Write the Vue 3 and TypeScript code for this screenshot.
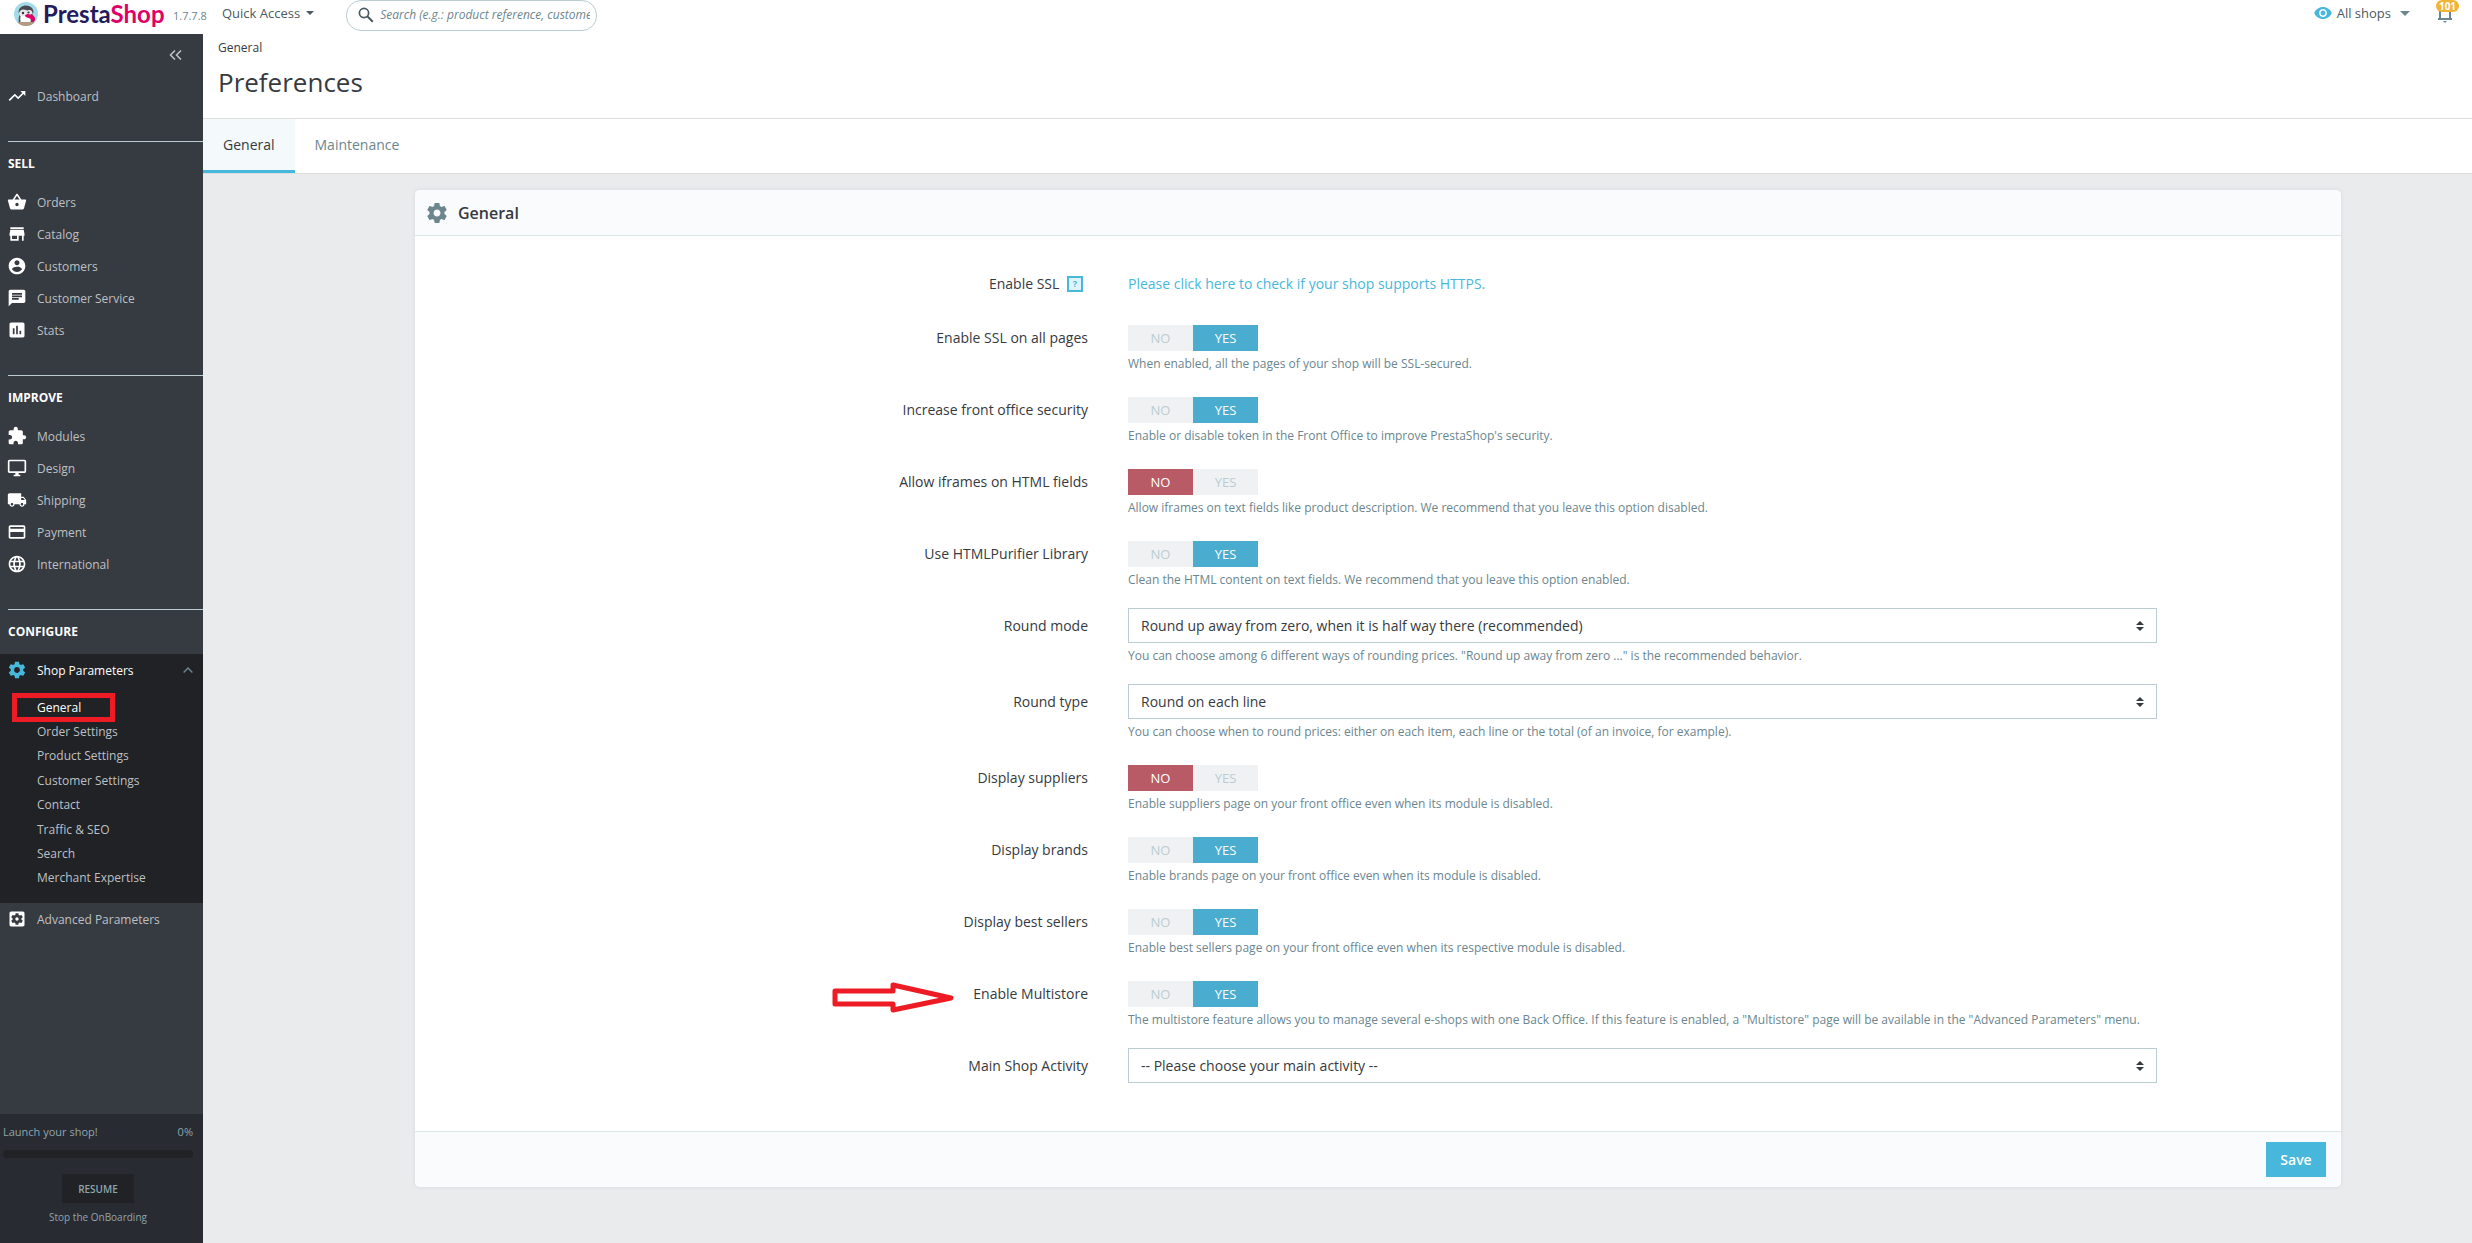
<script setup lang="ts">
import { ref, reactive } from 'vue'

interface NavItem {
  label: string
  icon: string
}

interface NavSection {
  title: string
  items: NavItem[]
}

interface Field {
  id: string
  label: string
  kind: 'switch' | 'select'
  value: string
  help?: string
  marked?: boolean
}

const icons: Record<string, string> = {
  trending: 'M16 6l2.29 2.29-4.88 4.88-4-4L2 16.59 3.41 18l6-6 4 4 6.3-6.29L22 12V6z',
  basket:
    'M17.21 9l-4.38-6.56c-.19-.28-.51-.42-.83-.42-.32 0-.64.14-.83.43L6.79 9H2c-.55 0-1 .45-1 1 0 .09.01.18.04.27l2.54 9.27c.23.84 1 1.46 1.92 1.46h13c.92 0 1.69-.62 1.93-1.46l2.54-9.27L23 10c0-.55-.45-1-1-1h-4.79zM9 9l3-4.4L15 9H9zm3 8c-1.1 0-2-.9-2-2s.9-2 2-2 2 .9 2 2-.9 2-2 2z',
  store: 'M20 4H4v2h16V4zm1 10v-2l-1-5H4l-1 5v2h1v6h10v-6h4v6h2v-6h1zm-9 4H6v-4h6v4z',
  account:
    'M12 2C6.48 2 2 6.48 2 12s4.48 10 10 10 10-4.48 10-10S17.52 2 12 2zm0 3c1.66 0 3 1.34 3 3s-1.34 3-3 3-3-1.34-3-3 1.34-3 3-3zm0 14.2c-2.5 0-4.71-1.28-6-3.22.03-1.99 4-3.08 6-3.08 1.99 0 5.97 1.09 6 3.08-1.29 1.94-3.5 3.22-6 3.22z',
  chat: 'M20 2H4c-1.1 0-1.99.9-1.99 2L2 22l4-4h14c1.1 0 2-.9 2-2V4c0-1.1-.9-2-2-2zM6 9h12v2H6V9zm8 5H6v-2h8v2zm4-6H6V6h12v2z',
  chart:
    'M19 3H5c-1.1 0-2 .9-2 2v14c0 1.1.9 2 2 2h14c1.1 0 2-.9 2-2V5c0-1.1-.9-2-2-2zM9 17H7v-7h2v7zm4 0h-2V7h2v10zm4 0h-2v-4h2v4z',
  puzzle:
    'M20.5 11H19V7c0-1.1-.9-2-2-2h-4V3.5C13 2.12 11.88 1 10.5 1S8 2.12 8 3.5V5H4c-1.1 0-1.99.9-1.99 2v3.8H3.5c1.49 0 2.7 1.21 2.7 2.7s-1.21 2.7-2.7 2.7H2V20c0 1.1.9 2 2 2h3.8v-1.5c0-1.49 1.21-2.7 2.7-2.7 1.49 0 2.7 1.21 2.7 2.7V22H17c1.1 0 2-.9 2-2v-4h1.5c1.38 0 2.5-1.12 2.5-2.5S21.88 11 20.5 11z',
  desktop:
    'M21 2H3c-1.1 0-2 .9-2 2v12c0 1.1.9 2 2 2h7v2H8v2h8v-2h-2v-2h7c1.1 0 2-.9 2-2V4c0-1.1-.9-2-2-2zm0 14H3V4h18v12z',
  truck:
    'M20 8h-3V4H3c-1.1 0-2 .9-2 2v11h2c0 1.66 1.34 3 3 3s3-1.34 3-3h6c0 1.66 1.34 3 3 3s3-1.34 3-3h2v-5l-3-4zM6 18.5c-.83 0-1.5-.67-1.5-1.5s.67-1.5 1.5-1.5 1.5.67 1.5 1.5-.67 1.5-1.5 1.5zm13.5-9l1.96 2.5H17V9.5h2.5zm-1.5 9c-.83 0-1.5-.67-1.5-1.5s.67-1.5 1.5-1.5 1.5.67 1.5 1.5-.67 1.5-1.5 1.5z',
  card: 'M20 4H4c-1.11 0-1.99.89-1.99 2L2 18c0 1.11.89 2 2 2h16c1.11 0 2-.89 2-2V6c0-1.11-.89-2-2-2zm0 14H4v-6h16v6zm0-10H4V6h16v2z',
  globe:
    'M11.99 2C6.47 2 2 6.48 2 12s4.47 10 9.99 10C17.52 22 22 17.52 22 12S17.52 2 11.99 2zm6.93 6h-2.95c-.32-1.25-.78-2.45-1.38-3.56 1.84.63 3.37 1.91 4.33 3.56zM12 4.04c.83 1.2 1.48 2.53 1.91 3.96h-3.82c.43-1.43 1.08-2.76 1.91-3.96zM4.26 14C4.1 13.36 4 12.69 4 12s.1-1.36.26-2h3.38c-.08.66-.14 1.32-.14 2s.06 1.34.14 2H4.26zm.82 2h2.95c.32 1.25.78 2.45 1.38 3.56-1.84-.63-3.37-1.9-4.33-3.56zm2.95-8H5.08c.96-1.66 2.49-2.93 4.33-3.56C8.81 5.55 8.35 6.75 8.03 8zM12 19.96c-.83-1.2-1.48-2.53-1.91-3.96h3.82c-.43 1.43-1.08 2.76-1.91 3.96zM14.34 14H9.66c-.09-.66-.16-1.32-.16-2s.07-1.35.16-2h4.68c.09.65.16 1.32.16 2s-.07 1.34-.16 2zm.25 5.56c.6-1.11 1.06-2.31 1.38-3.56h2.95c-.96 1.65-2.49 2.93-4.33 3.56zM16.36 14c.08-.66.14-1.32.14-2s-.06-1.34-.14-2h3.38c.16.64.26 1.31.26 2s-.1 1.36-.26 2h-3.38z',
  gear: 'M19.43 12.98c.04-.32.07-.64.07-.98s-.03-.66-.07-.98l2.11-1.65c.19-.15.24-.42.12-.64l-2-3.46c-.12-.22-.39-.3-.61-.22l-2.49 1c-.52-.4-1.08-.73-1.69-.98l-.38-2.65C14.46 2.18 14.25 2 14 2h-4c-.25 0-.46.18-.49.42l-.38 2.65c-.61.25-1.17.59-1.69.98l-2.49-1c-.23-.09-.49 0-.61.22l-2 3.46c-.13.22-.07.49.12.64l2.11 1.65c-.04.32-.07.65-.07.98s.03.66.07.98l-2.11 1.65c-.19.15-.24.42-.12.64l2 3.46c.12.22.39.3.61.22l2.49-1c.52.4 1.08.73 1.69.98l.38 2.65c.03.24.24.42.49.42h4c.25 0 .46-.18.49-.42l.38-2.65c.61-.25 1.17-.59 1.69-.98l2.49 1c.23.09.49 0 .61-.22l2-3.46c.12-.22.07-.49-.12-.64l-2.11-1.65zM12 15.5c-1.93 0-3.5-1.57-3.5-3.5s1.57-3.5 3.5-3.5 3.5 1.57 3.5 3.5-1.57 3.5-3.5 3.5z',
  gearBox:
    'M12 10c-1.1 0-2 .9-2 2s.9 2 2 2 2-.9 2-2-.9-2-2-2zm7-7H5c-1.11 0-2 .9-2 2v14c0 1.1.89 2 2 2h14c1.11 0 2-.9 2-2V5c0-1.1-.89-2-2-2zm-1.75 9c0 .23-.02.46-.05.68l1.48 1.16c.13.11.17.3.08.45l-1.4 2.42c-.09.15-.27.21-.43.15l-1.74-.7c-.36.28-.76.51-1.18.69l-.26 1.85c-.03.17-.18.3-.35.3h-2.8c-.17 0-.32-.13-.35-.29l-.26-1.85c-.43-.18-.82-.41-1.18-.69l-1.74.7c-.16.06-.34 0-.43-.15l-1.4-2.42c-.09-.15-.05-.34.08-.45l1.48-1.16c-.03-.23-.05-.46-.05-.69s.02-.46.05-.68l-1.48-1.16c-.13-.11-.17-.3-.08-.45l1.4-2.42c.09-.15.27-.21.43-.15l1.74.7c.36-.28.76-.51 1.18-.69l.26-1.85c.03-.17.18-.3.35-.3h2.8c.17 0 .32.13.35.29l.26 1.85c.43.18.82.41 1.18.69l1.74-.7c.16-.06.34 0 .43.15l1.4 2.42c.09.15.05.34-.08.45l-1.48 1.16c.03.23.05.46.05.69z',
}

const sections: NavSection[] = [
  {
    title: 'SELL',
    items: [
      { label: 'Orders', icon: 'basket' },
      { label: 'Catalog', icon: 'store' },
      { label: 'Customers', icon: 'account' },
      { label: 'Customer Service', icon: 'chat' },
      { label: 'Stats', icon: 'chart' },
    ],
  },
  {
    title: 'IMPROVE',
    items: [
      { label: 'Modules', icon: 'puzzle' },
      { label: 'Design', icon: 'desktop' },
      { label: 'Shipping', icon: 'truck' },
      { label: 'Payment', icon: 'card' },
      { label: 'International', icon: 'globe' },
    ],
  },
]

const submenu = [
  'General',
  'Order Settings',
  'Product Settings',
  'Customer Settings',
  'Contact',
  'Traffic & SEO',
  'Search',
  'Merchant Expertise',
]

const currentPage = ref('General')
const query = ref('')

const fields = reactive<Field[]>([
  {
    id: 'ssl-all',
    label: 'Enable SSL on all pages',
    kind: 'switch',
    value: 'yes',
    help: 'When enabled, all the pages of your shop will be SSL-secured.',
  },
  {
    id: 'security',
    label: 'Increase front office security',
    kind: 'switch',
    value: 'yes',
    help: "Enable or disable token in the Front Office to improve PrestaShop's security.",
  },
  {
    id: 'iframes',
    label: 'Allow iframes on HTML fields',
    kind: 'switch',
    value: 'no',
    help: 'Allow iframes on text fields like product description. We recommend that you leave this option disabled.',
  },
  {
    id: 'purifier',
    label: 'Use HTMLPurifier Library',
    kind: 'switch',
    value: 'yes',
    help: 'Clean the HTML content on text fields. We recommend that you leave this option enabled.',
  },
  {
    id: 'round-mode',
    label: 'Round mode',
    kind: 'select',
    value: 'Round up away from zero, when it is half way there (recommended)',
    help: 'You can choose among 6 different ways of rounding prices. "Round up away from zero ..." is the recommended behavior.',
  },
  {
    id: 'round-type',
    label: 'Round type',
    kind: 'select',
    value: 'Round on each line',
    help: 'You can choose when to round prices: either on each item, each line or the total (of an invoice, for example).',
  },
  {
    id: 'suppliers',
    label: 'Display suppliers',
    kind: 'switch',
    value: 'no',
    help: 'Enable suppliers page on your front office even when its module is disabled.',
  },
  {
    id: 'brands',
    label: 'Display brands',
    kind: 'switch',
    value: 'yes',
    help: 'Enable brands page on your front office even when its module is disabled.',
  },
  {
    id: 'best-sellers',
    label: 'Display best sellers',
    kind: 'switch',
    value: 'yes',
    help: 'Enable best sellers page on your front office even when its respective module is disabled.',
  },
  {
    id: 'multistore',
    label: 'Enable Multistore',
    kind: 'switch',
    value: 'yes',
    help: 'The multistore feature allows you to manage several e-shops with one Back Office. If this feature is enabled, a "Multistore" page will be available in the "Advanced Parameters" menu.',
    marked: true,
  },
  {
    id: 'activity',
    label: 'Main Shop Activity',
    kind: 'select',
    value: '-- Please choose your main activity --',
  },
])
</script>

<template>
  <div class="page">
    <header class="topbar">
      <a class="brand" href="#">
        <svg class="brand-mark" viewBox="0 0 24 24" aria-hidden="true">
          <defs>
            <clipPath id="mark-clip"><circle cx="12" cy="12" r="12" /></clipPath>
          </defs>
          <g clip-path="url(#mark-clip)">
            <rect width="24" height="24" fill="#a4dbe8" />
            <path d="M5 22c-1-5 0-8 1-11h12c2 4 2 8 1 11z" fill="#54545c" />
            <path d="M7 22c-1-4-1-6 0-9l9-1c1 4 1 7 0 10z" fill="#fff" />
            <path d="M4.500 10.500C4.500 6 8 3.500 12 3.500c4.500 0 7.500 3 7.500 7l-2 2H6z" fill="#4a4a54" />
            <path d="M5 12c0-3 2-4.500 4.500-4.500 2 0 3 1 3.500 1s1.500-.5 2.500-.5c2 0 3 1.500 3 3.500L14 14H6z" fill="#e8e8ea" />
            <circle cx="9" cy="11" r="1.200" fill="#35353f" />
            <circle cx="14.500" cy="10.500" r="1.100" fill="#35353f" />
            <path d="M11 13.500c1.500-2 4-2 6-.5 2.500 0 4.500 2 4 5-.5 2-2 2.500-3 1.500 0-2-1.500-3-3.500-3.500s-3-1-3.500-2.500z" fill="#df0067" />
            <path d="M2 20.500c3-1 6-.5 10-.5s7-.5 10 .5V24H2z" fill="#b59a80" />
          </g>
        </svg>
        <span class="brand-name">Presta<span class="pink">Shop</span></span>
      </a>
      <span class="version">1.7.7.8</span>
      <button class="quick" type="button">Quick Access <span class="caret"></span></button>
      <form class="search" role="search" @submit.prevent>
        <svg viewBox="0 0 16 16" aria-hidden="true">
          <circle cx="6" cy="6" r="4.600" fill="none" stroke="#4b5960" stroke-width="1.700" />
          <path d="M9.300 9.300L14.800 14.800" stroke="#4b5960" stroke-width="2" />
        </svg>
        <input
          v-model="query"
          type="text"
          aria-label="Search"
          placeholder="Search (e.g.: product reference, customer name…)"
        />
      </form>
      <button class="shops" type="button">
        <svg viewBox="0 0 22 15" aria-hidden="true">
          <path
            d="M11 0C6 0 1.730 3.110 0 7.500 1.730 11.890 6 15 11 15s9.270-3.110 11-7.500C20.270 3.110 16 0 11 0zm0 12.500c-2.760 0-5-2.240-5-5s2.240-5 5-5 5 2.240 5 5-2.240 5-5 5zm0-8c-1.660 0-3 1.340-3 3s1.340 3 3 3 3-1.340 3-3-1.340-3-3-3z"
            fill="#47b8dc"
          />
        </svg>
        All shops
        <span class="caret wide"></span>
      </button>
      <button class="bell" type="button" aria-label="Notifications">
        <svg viewBox="0 0 16 19" aria-hidden="true">
          <path d="M3 14V7c0-3 2-5 5-5s5 2 5 5v7" fill="none" stroke="#6c868e" stroke-width="2" />
          <path d="M1 14h14v2H1z" fill="#6c868e" />
          <path d="M6 17h4l-2 2z" fill="#6c868e" />
        </svg>
        <span class="badge">101</span>
      </button>
    </header>

    <div class="columns">
      <nav class="sidebar" aria-label="Main menu">
        <button class="collapse" type="button" aria-label="Collapse menu">
          <svg viewBox="0 0 14 10" aria-hidden="true">
            <path d="M6 .5L1.500 5 6 9.500M12 .5L7.500 5 12 9.500" fill="none" stroke="#bec0c3" stroke-width="1.600" />
          </svg>
        </button>
        <a class="item dashboard" href="#">
          <svg viewBox="0 0 24 24" aria-hidden="true"><path :d="icons.trending" /></svg>Dashboard
        </a>

        <section v-for="s in sections" :key="s.title" class="group">
          <h2>{{ s.title }}</h2>
          <a v-for="i in s.items" :key="i.label" class="item" href="#">
            <svg viewBox="0 0 24 24" aria-hidden="true"><path :d="icons[i.icon]" /></svg>{{ i.label }}
          </a>
        </section>

        <section class="group">
          <h2>CONFIGURE</h2>
          <div class="open">
            <a class="item current" href="#">
              <svg viewBox="0 0 24 24" aria-hidden="true"><path :d="icons.gear" /></svg>Shop Parameters
              <svg class="chevron" viewBox="0 0 10 6" aria-hidden="true">
                <path d="M.6 5.400L5 1l4.400 4.400" />
              </svg>
            </a>
            <ul class="submenu">
              <li v-for="s in submenu" :key="s">
                <a href="#" :class="{ selected: s === currentPage }" @click.prevent="currentPage = s">{{ s }}</a>
              </li>
            </ul>
          </div>
          <a class="item" href="#">
            <svg viewBox="0 0 24 24" aria-hidden="true"><path :d="icons.gearBox" /></svg>Advanced Parameters
          </a>
        </section>

        <div class="onboarding">
          <div class="progress-text"><span>Launch your shop!</span><span>0%</span></div>
          <div class="bar" role="progressbar" aria-label="Launch your shop!" aria-valuenow="0"></div>
          <button class="resume" type="button">RESUME</button>
          <a class="stop" href="#">Stop the OnBoarding</a>
        </div>
      </nav>

      <main class="main">
        <div class="heading">
          <a class="crumb" href="#">General</a>
          <h1>Preferences</h1>
        </div>
        <nav class="tabs" aria-label="Preferences">
          <a class="tab active" href="#">General</a>
          <a class="tab" href="#">Maintenance</a>
        </nav>

        <div class="content">
          <form class="card" @submit.prevent>
            <h3 class="card-head">
              <svg viewBox="0 0 24 24" aria-hidden="true"><path :d="icons.gear" /></svg>General
            </h3>
            <div class="card-body">
              <div class="row first">
                <span class="label">
                  Enable SSL <button class="hint" type="button" aria-label="Help">?</button>
                </span>
                <div class="field">
                  <a class="check" href="#">Please click here to check if your shop supports HTTPS.</a>
                </div>
              </div>

              <div v-for="f in fields" :key="f.id" class="row" :class="f.kind">
                <label v-if="f.kind === 'select'" class="label" :for="f.id">{{ f.label }}</label>
                <span v-else :id="f.id + '-label'" class="label">
                  {{ f.label }}
                  <svg v-if="f.marked" class="arrow" viewBox="0 0 122 31" aria-hidden="true">
                    <path d="M3 9H61V3L119 16 61 28V22H3z" />
                  </svg>
                </span>
                <div class="field">
                  <div v-if="f.kind === 'switch'" class="toggle" role="radiogroup" :aria-labelledby="f.id + '-label'">
                    <label class="no" :class="{ on: f.value === 'no' }">
                      <input v-model="f.value" type="radio" :name="f.id" value="no" />NO
                    </label>
                    <label class="yes" :class="{ on: f.value === 'yes' }">
                      <input v-model="f.value" type="radio" :name="f.id" value="yes" />YES
                    </label>
                  </div>
                  <div v-else class="select-wrap">
                    <select :id="f.id">
                      <option>{{ f.value }}</option>
                    </select>
                    <svg viewBox="0 0 8 10" aria-hidden="true"><path d="M4 0l4 4H0zM4 10L0 6h8z" /></svg>
                  </div>
                  <p v-if="f.help" class="help">{{ f.help }}</p>
                </div>
              </div>
            </div>
            <div class="card-foot"><button class="save" type="submit">Save</button></div>
          </form>
        </div>
      </main>
    </div>
  </div>
</template>

<style>
body {
  margin: 0;
  background: #eaebec;
}
</style>

<style scoped>
.page,
.page *,
.page *::before {
  box-sizing: border-box;
}
.page {
  display: flex;
  flex-direction: column;
  min-height: 100vh;
  font-family: 'Open Sans', 'Noto Sans', sans-serif;
  font-size: 14px;
  color: #363a41;
}
a {
  color: inherit;
  text-decoration: none;
}
button,
input,
select {
  font: inherit;
  color: inherit;
  margin: 0;
}
button {
  border: 0;
  padding: 0;
  background: none;
  cursor: pointer;
}

/* Top bar */
.topbar {
  display: flex;
  align-items: flex-start;
  height: 34px;
  background: #fff;
  font-size: 13px;
  color: #4b5960;
}
.brand {
  display: flex;
  gap: 5px;
  width: 173px;
  padding: 2px 0 0 14px;
}
.brand-mark {
  width: 24px;
  height: 24px;
}
.brand-name {
  font-family: Lato, 'Open Sans', sans-serif;
  font-size: 24px;
  font-weight: 700;
  line-height: 24px;
  color: #251b5b;
}
.pink {
  color: #df0067;
}
.version {
  width: 49px;
  font-size: 11px;
  line-height: 32px;
  color: #6c868e;
}
.quick,
.shops {
  display: flex;
  align-items: center;
  height: 26px;
}
.caret {
  margin-left: 6px;
  border: 4px solid transparent;
  border-top-color: #4b5960;
  border-bottom: 0;
}
.search {
  display: flex;
  align-items: center;
  gap: 6px;
  width: 251px;
  height: 31px;
  margin-left: 32px;
  padding: 0 6px 2px 11px;
  border: 1px solid #bbcdd2;
  border-radius: 15px;
}
.search svg {
  flex: none;
  width: 16px;
  height: 16px;
}
.search input {
  width: 100%;
  min-width: 0;
  padding: 0;
  border: 0;
  outline: 0;
  background: none;
  font-size: 12px;
  font-style: italic;
}
.search input::placeholder {
  color: #6c868e;
  opacity: 1;
}
.shops {
  gap: 5px;
  margin-left: auto;
}
.shops svg {
  width: 18px;
  height: 12px;
}
.caret.wide {
  border-width: 5px;
  border-bottom: 0;
  margin-left: 4px;
  border-top-color: #6c868e;
}
.bell {
  position: relative;
  width: 16px;
  margin: 4px 19px 0 27px;
}
.bell svg {
  display: block;
  width: 16px;
  height: 19px;
}
.badge {
  position: absolute;
  top: -4px;
  left: -1px;
  width: 23px;
  border-radius: 6px;
  background: #f1b436;
  color: #fff;
  font-size: 10px;
  font-weight: 700;
  line-height: 12px;
}

.columns {
  display: flex;
  flex: 1;
}

/* Sidebar */
.sidebar {
  display: flex;
  flex-direction: column;
  flex: none;
  width: 203px;
  background: #363a41;
  color: #bec0c3;
  font-size: 12px;
}
.collapse {
  align-self: flex-end;
  height: 42px;
  margin: 0 20px 4px 0;
}
.collapse svg {
  display: block;
  width: 14px;
  height: 10px;
}
.item {
  display: flex;
  align-items: center;
  gap: 10px;
  height: 32px;
  padding-left: 7px;
}
.item svg {
  flex: none;
  width: 20px;
  height: 20px;
  fill: #fff;
}
.dashboard {
  margin-bottom: 29px;
}
.group {
  padding-bottom: 29px;
}
.group h2 {
  margin: 0 0 0 8px;
  border-top: 1px solid #bbcdd2;
  font-size: 12px;
  font-weight: 700;
  line-height: 44px;
  color: #fff;
}
.open {
  background: #202226;
  padding-bottom: 13px;
}
.item.current {
  color: #fff;
}
.current svg {
  fill: #47b8dc;
}
.current .chevron {
  width: 10px;
  height: 6px;
  margin: 0 10px 0 auto;
  fill: none;
  stroke: #6c868e;
  stroke-width: 1.4;
}
.submenu {
  display: grid;
  grid-template-rows: repeat(8, 1fr);
  height: 204px;
  margin: 0;
  padding: 9px 0 0 37px;
  list-style: none;
}
.submenu li {
  display: flex;
  align-items: center;
}
.submenu a {
  position: relative;
}
.submenu .selected {
  color: #fff;
}
.submenu .selected::before {
  content: '';
  position: absolute;
  top: -6px;
  left: -25px;
  width: 103px;
  height: 29px;
  border: 5px solid #ed1c24;
}
.onboarding {
  display: flex;
  flex-direction: column;
  height: 129px;
  margin-top: auto;
  padding: 10px 10px 0 3px;
  background: #292b33;
  color: #8fa5ab;
}
.progress-text {
  display: flex;
  justify-content: space-between;
  font-size: 11px;
  line-height: 16px;
}
.bar {
  height: 8px;
  margin-top: 10px;
  border-radius: 4px;
  background: #202226;
}
.resume {
  align-self: center;
  width: 72px;
  height: 29px;
  margin-top: 16px;
  background: #202226;
  font-size: 10px;
  font-weight: 600;
}
.stop {
  align-self: center;
  margin-top: 6px;
  font-size: 10px;
  line-height: 16px;
}

/* Page heading and tabs */
.main {
  flex: 1;
  min-width: 0;
}
.heading {
  padding: 4px 15px 18px;
  border-bottom: 1px solid #dddddd;
  background: #fff;
}
.crumb {
  display: block;
  font-size: 12px;
  line-height: 19px;
}
h1 {
  margin: 7px 0 0;
  font-size: 26px;
  font-weight: 400;
  line-height: 36px;
}
.tabs {
  display: flex;
  height: 55px;
  border-bottom: 1px solid #dddddd;
  background: #fff;
}
.tab {
  padding: 0 20px;
  line-height: 52px;
  color: #6c868e;
}
.tab.active {
  border-bottom: 3px solid #47b8dc;
  background: #f4f9fc;
  color: #363a41;
}

/* Form card */
.content {
  padding: 16px 131px 32px 212px;
}
.card {
  border-radius: 5px;
  background: #fff;
  box-shadow: 0 0 4px 0 #d3dadd;
}
.card-head {
  display: flex;
  align-items: center;
  gap: 9px;
  height: 46px;
  margin: 0;
  padding-left: 10px;
  border-bottom: 1px solid #dbe6e9;
  border-radius: 5px 5px 0 0;
  background: #fafbfc;
  font-size: 16px;
  font-weight: 600;
}
.card-head svg {
  width: 24px;
  height: 24px;
  fill: #6c868e;
}
.card-body {
  padding: 30px 0 48px;
}
.row {
  display: grid;
  grid-template-columns: 713fr 1029fr 184fr;
}
.row.first {
  height: 54px;
}
.row.switch {
  min-height: 72px;
}
.row.select {
  min-height: 76px;
}
.row:last-child {
  min-height: 0;
}
.label {
  position: relative;
  padding-right: 40px;
  line-height: 35px;
  text-align: right;
}
.hint {
  width: 16px;
  height: 16px;
  margin: 0 5px 0 4px;
  border: 2px solid #47b8dc;
  background: #dff5fb;
  color: #47b8dc;
  font-size: 9px;
  font-weight: 700;
  line-height: 12px;
  vertical-align: 2px;
}
.check {
  line-height: 35px;
  color: #47b8dc;
}
.toggle {
  display: flex;
  margin-top: 5px;
}
.toggle label {
  position: relative;
  width: 65px;
  background: #eff1f2;
  color: #bbcdd2;
  font-size: 13px;
  line-height: 26px;
  text-align: center;
}
.toggle input {
  position: absolute;
  inset: 0;
  opacity: 0;
}
.toggle .no.on {
  background: #b95a67;
  color: #fff;
}
.toggle .yes.on {
  background: #4aaccf;
  color: #fff;
}
.select-wrap {
  position: relative;
}
.select-wrap select {
  display: block;
  width: 100%;
  height: 35px;
  padding: 0 12px;
  border: 1px solid #bbcdd2;
  border-radius: 0;
  background: #fff;
  appearance: none;
}
.select-wrap svg {
  position: absolute;
  top: 13px;
  right: 13px;
  width: 8px;
  height: 10px;
  fill: #363a41;
  pointer-events: none;
}
.help {
  margin: 4px 0 0;
  font-size: 12px;
  line-height: 17px;
  color: #6c868e;
}
.arrow {
  position: absolute;
  top: 6px;
  right: 174px;
  width: 122px;
  height: 31px;
  fill: none;
  stroke: #ed1c24;
  stroke-width: 5;
  stroke-linejoin: round;
}
.card-foot {
  display: flex;
  justify-content: flex-end;
  padding: 10px 15px;
  border-top: 1px solid #dbe6e9;
  border-radius: 0 0 5px 5px;
  background: #fafbfc;
}
.save {
  width: 60px;
  height: 35px;
  background: #47b8dc;
  color: #fff;
  font-weight: 600;
}
</style>
